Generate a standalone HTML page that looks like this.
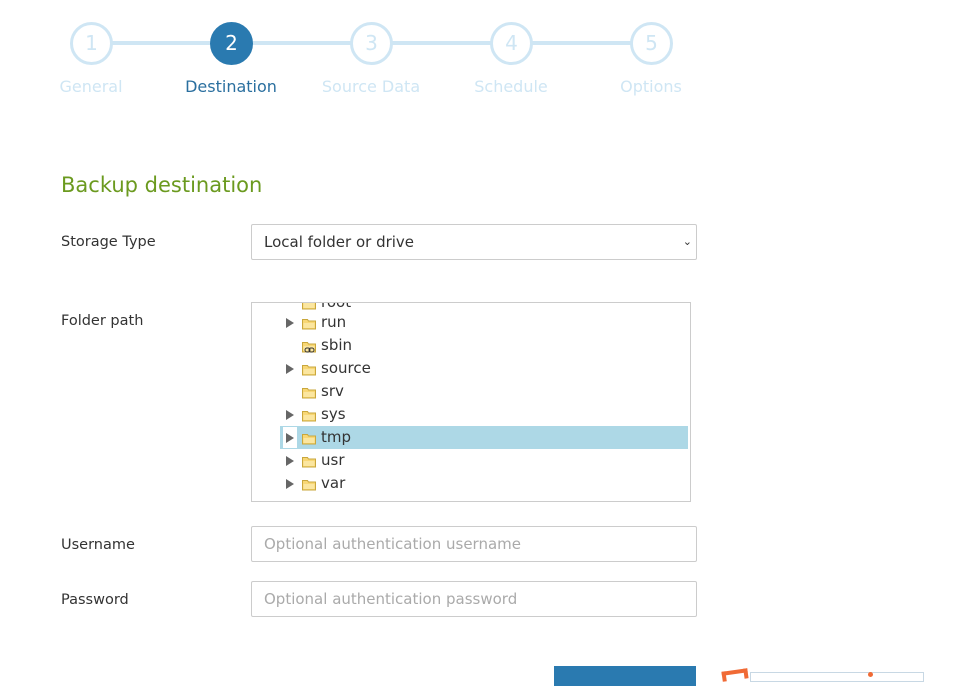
<!DOCTYPE html>
<html><head><meta charset="utf-8"><style>
*{box-sizing:border-box;margin:0;padding:0}
body{width:967px;height:676px;overflow:hidden;background:#fff;font-family:"DejaVu Sans","Liberation Sans",sans-serif;position:relative;color:#333}
.line{position:absolute;top:41px;height:4px;background:#cfe6f4}
.c{position:absolute;top:22px;width:43px;height:43px;border-radius:50%;border:3px solid #cfe6f4;background:#fff;color:#cfe6f4;font-size:20px;text-align:center;line-height:37px}
.c.a{background:#2a7ab0;border-color:#2a7ab0;color:#fff}
.l{position:absolute;top:77px;width:140px;text-align:center;font-size:16px;color:#cfe6f4}
.l.a{color:#2a6f9f}
h2{position:absolute;left:61px;top:173px;font-weight:normal;font-size:21px;color:#6b9a1f}
.lab{position:absolute;left:61px;font-size:14.5px;color:#333}
.inp{position:absolute;left:251px;width:446px;height:36px;border:1px solid #ccc;border-radius:2px;font-size:15px;color:#aaa;padding-left:12px;line-height:34px}
.tree{position:absolute;left:251px;top:302px;width:440px;height:200px;border:1px solid #ccc;overflow:hidden}
.row{position:absolute;left:28px;height:23px;width:408px;font-size:15px;color:#333;line-height:22px}
.row.sel{background:#add8e6}
.tri{position:absolute;left:6px;top:7px;width:0;height:0;border-left:8px solid #666;border-top:5px solid transparent;border-bottom:5px solid transparent}
.f{position:absolute;left:22px;top:6px}
.t{position:absolute;left:41px}
</style></head><body>
<div class="line" style="left:112px;width:520px"></div>
<div class="c" style="left:70px">1</div>
<div class="c a" style="left:210px">2</div>
<div class="c" style="left:350px">3</div>
<div class="c" style="left:490px">4</div>
<div class="c" style="left:630px">5</div>
<div class="l" style="left:21px">General</div>
<div class="l a" style="left:161px">Destination</div>
<div class="l" style="left:301px">Source Data</div>
<div class="l" style="left:441px">Schedule</div>
<div class="l" style="left:581px">Options</div>
<h2>Backup destination</h2>
<div class="lab" style="top:234px">Storage Type</div>
<div class="inp" style="top:224px;color:#333;background:#fff">Local folder or drive<span style="position:absolute;right:4px;top:0;font-size:11px">&#8964;</span></div>
<div class="lab" style="top:313px">Folder path</div>
<div class="tree">
<svg width="0" height="0" style="position:absolute"><defs><g id="fo"><path d="M0.5 2.5h5l1 1.5h7v8h-13z" fill="#f8d775" stroke="#c9a73c"/><path d="M1.5 6h11v5h-11z" fill="#fbe6a0"/></g></defs></svg>
<div class="row" style="top:-12px"><svg class="f" width="15" height="13"><use href="#fo"/></svg><span class="t">root</span></div>
<div class="row" style="top:8px"><div class="tri"></div><svg class="f" width="15" height="13"><use href="#fo"/></svg><span class="t">run</span></div>
<div class="row" style="top:31px"><svg class="f" width="15" height="13"><use href="#fo"/><rect x="3" y="8" width="5" height="4" rx="2" fill="none" stroke="#333"/><rect x="7" y="8" width="5" height="4" rx="2" fill="none" stroke="#333"/></svg><span class="t">sbin</span></div>
<div class="row" style="top:54px"><div class="tri"></div><svg class="f" width="15" height="13"><use href="#fo"/></svg><span class="t">source</span></div>
<div class="row" style="top:77px"><svg class="f" width="15" height="13"><use href="#fo"/></svg><span class="t">srv</span></div>
<div class="row" style="top:100px"><div class="tri"></div><svg class="f" width="15" height="13"><use href="#fo"/></svg><span class="t">sys</span></div>
<div class="row sel" style="top:123px"><div style="position:absolute;left:3px;top:1px;width:14px;height:21px;background:#fff"></div><div class="tri"></div><svg class="f" width="15" height="13"><use href="#fo"/></svg><span class="t">tmp</span></div>
<div class="row" style="top:146px"><div class="tri"></div><svg class="f" width="15" height="13"><use href="#fo"/></svg><span class="t">usr</span></div>
<div class="row" style="top:169px"><div class="tri"></div><svg class="f" width="15" height="13"><use href="#fo"/></svg><span class="t">var</span></div>
</div>
<div class="lab" style="top:537px">Username</div>
<div class="inp" style="top:526px">Optional authentication username</div>
<div class="lab" style="top:592px">Password</div>
<div class="inp" style="top:581px">Optional authentication password</div>
<div style="position:absolute;left:554px;top:666px;width:142px;height:20px;background:#2a7ab0"></div>
<div style="position:absolute;left:750px;top:672px;width:174px;height:10px;border:1px solid #c8d8e4"></div>
<div style="position:absolute;left:722px;top:670px;width:26px;height:10px;border:4px solid #f06a35;border-bottom:none;transform:rotate(-8deg)"></div>
<div style="position:absolute;left:868px;top:672px;width:5px;height:5px;border-radius:50%;background:#f06a35"></div>
</body></html>
